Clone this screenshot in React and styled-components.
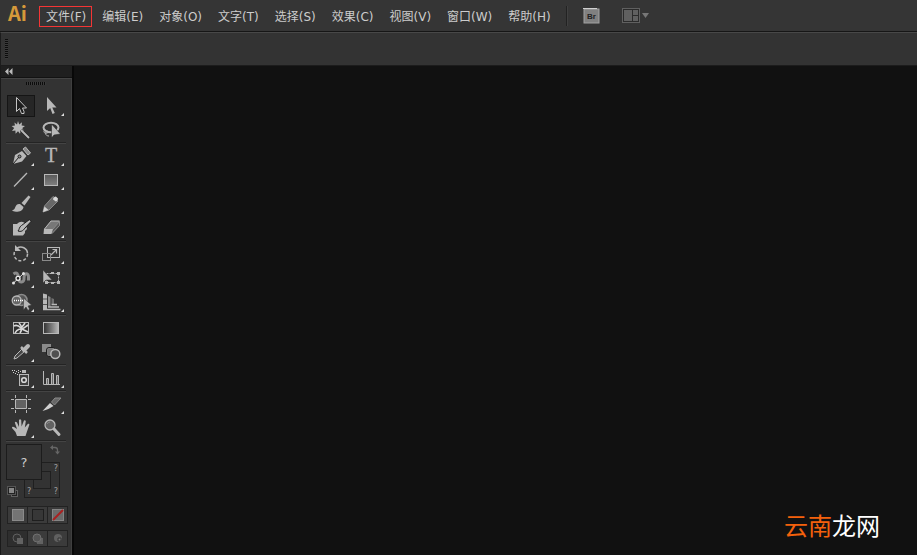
import styled, { createGlobalStyle } from "styled-components";

const GlobalStyle = createGlobalStyle`
  * {
    box-sizing: border-box;
  }

  body {
    margin: 0;
    background-color: #111111;
    font-family: "DejaVu Sans", "Noto Sans CJK SC", sans-serif;
    font-size: 12px;
    color: #cccccc;
  }

  button {
    margin: 0;
    padding: 0;
    border: none;
    background: none;
    color: inherit;
    font: inherit;
    cursor: pointer;
  }

  svg {
    display: block;
  }
`;

const AppWrapper = styled.div`
  display: flex;
  flex-direction: column;
  min-height: 100vh;
`;

const MenuBar = styled.header`
  display: flex;
  align-items: center;
  height: 32px;
  padding-left: 8px;
  background-color: #353535;
  border-bottom: 1px solid #161616;
`;

const AppLogo = styled.div`
  align-self: flex-start;
  width: 31px;
  font-family: "Noto Sans CJK SC", sans-serif;
  font-size: 20px;
  font-weight: bold;
  line-height: 26px;
  color: #d5993a;
`;

const MenuList = styled.nav`
  display: flex;
  gap: 4px;
  margin-top: 2px;
`;

const MenuItem = styled.button`
  height: 21px;
  padding: 0 5px 0 6px;
  line-height: 18px;
  white-space: nowrap;
  border: 1px solid ${(props) => (props.$active ? "#f43535" : "transparent")};

  & + & {
    padding-left: 5px;
  }
`;

const MenuDivider = styled.div`
  width: 2px;
  height: 20px;
  margin: 0 15px 0 9px;
  background-color: #222222;
  border-right: 1px solid #404040;
`;

const BarButton = styled.button`
  margin-right: 22px;
`;

const ControlBar = styled.div`
  display: flex;
  align-items: center;
  height: 34px;
  padding-left: 4px;
  background-color: #333333;
  border-top: 1px solid #484848;
  border-bottom: 1px solid #1c1c1c;
  border-left: 1px solid #1c1c1c;
`;

const BarGrip = styled.div`
  width: 3px;
  height: 20px;
  background: repeating-linear-gradient(#0c0c0c 0 1px, #3a3a3a 1px 2px);
`;

const Workspace = styled.main`
  display: flex;
  flex: 1;
`;

const ToolPanel = styled.aside`
  flex: none;
  width: 74px;
  background-color: #333333;
  border-left: 1px solid #1a1a1a;
  border-right: 2px solid #080808;
`;

const PanelHeader = styled.button`
  display: block;
  width: 100%;
  height: 12px;
  padding: 2px 4px;
  background-color: #1f1f1f;
  border-bottom: 1px solid #121212;
`;

const PanelBody = styled.div`
  padding: 3px 4px 8px 5px;
  border-top: 1px solid #444444;
  border-right: 1px solid #3f3f3f;
`;

const PanelGrip = styled.div`
  width: 20px;
  height: 3px;
  margin: 0 auto 9px 20px;
  background: repeating-linear-gradient(
    90deg,
    #0c0c0c 0 1px,
    #3a3a3a 1px 2px
  );
`;

const ToolGroup = styled.div`
  display: grid;
  grid-template-columns: 30px 30px;
  width: 60px;
  border-bottom: 1px solid #444444;
  box-shadow: inset 0 -1px 0 #242424;
  padding-bottom: 1px;
`;

const ToolButton = styled.button`
  width: 30px;
  height: 24px;
`;

const ColorArea = styled.div`
  position: relative;
  width: 60px;
  height: 64px;
`;

const FillSwatch = styled.button`
  position: absolute;
  top: 2px;
  left: 0;
  width: 36px;
  height: 36px;
  border: 1px solid #1c1c1c;
  background-color: #333333;
  font-size: 13px;
`;

const StrokeSwatch = styled.button`
  position: absolute;
  top: 20px;
  left: 18px;
  display: flex;
  flex-direction: column;
  justify-content: space-between;
  width: 36px;
  height: 36px;
  padding: 1px;
  border: 1px solid #1f1f1f;
  font-size: 8px;
  line-height: 9px;
  color: #a0a0a0;
`;

const SwatchRow = styled.span`
  display: flex;
  justify-content: ${(props) => (props.$end ? "flex-end" : "space-between")};
  width: 100%;
  padding-left: 1px;
`;

const StrokeHole = styled.span`
  position: absolute;
  inset: 8px;
  border: 1px solid #1f1f1f;
`;

const SwapButton = styled.button`
  position: absolute;
  top: 3px;
  right: 6px;
`;

const DefaultButton = styled.button`
  position: absolute;
  top: 44px;
  left: 1px;
`;

const ModeRow = styled.div`
  display: flex;
  width: 61px;
  height: ${(props) => (props.$small ? "17px" : "18px")};
  margin: 0 0 6px 1px;
  border: 1px solid #222222;
`;

const ModeButton = styled.button`
  display: flex;
  flex: 1;
  align-items: center;
  justify-content: center;
  background-color: ${(props) => (props.$pressed ? "#2e2e2e" : "#3b3b3b")};

  & + & {
    border-left: 1px solid #222222;
  }
`;

const Canvas = styled.section`
  display: flex;
  flex: 1;
  align-items: flex-end;
  justify-content: flex-end;
  padding: 0 37px 18px 0;
  background-color: #111111;
`;

const Watermark = styled.div`
  font-family: "Noto Sans CJK SC", sans-serif;
  font-size: 24px;
  line-height: 36px;
  color: #ffffff;
`;

const WatermarkAccent = styled.span`
  color: #f4610c;
`;

const menus = [
  "文件(F)",
  "编辑(E)",
  "对象(O)",
  "文字(T)",
  "选择(S)",
  "效果(C)",
  "视图(V)",
  "窗口(W)",
  "帮助(H)",
];

const light = "#b8b8b8";
const mid = "#8a8a8a";
const dark = "#1e1e1e";

// every tool icon is drawn in a 30x24 cell
const icons = {
  selection: (
    <>
      <rect x="1.5" y="1.5" width="27" height="21" fill="#262626" stroke="#151515" />
      <path
        d="M10.5 3.5V17.5L13.5 14.5L15.5 19.5H18V17.5L16.5 14H20.5Z"
        fill={dark}
        stroke="#c4c4c4"
      />
    </>
  ),
  direct: <path d="M11 3V17L14.2 14L16.5 20L18.8 19L16.3 13.4H20.5Z" fill={light} />,
  wand: (
    <>
      <path
        d="M12 3L13.2 6.4L16 4.3L15.6 7.6L19 8L16.3 10L18 13L14.8 12.4L14 15.8L12 13.2L9.6 15.8L9.4 12.5L6 13L8.2 10L5.6 8L9 7.6L8.4 4.6L11 6.4Z"
        fill={light}
      />
      <path d="M15 12L23 20" stroke={dark} strokeWidth="3" />
      <path d="M15 12L23 20" stroke={light} strokeWidth="2" />
    </>
  ),
  lasso: (
    <>
      <ellipse cx="15" cy="9.5" rx="7.5" ry="4.8" fill="none" stroke={light} strokeWidth="2" />
      <path d="M9 12C7 13 8 16 11 15C14 14 12 12 10 14C9 16 10 18 13 18" fill="none" stroke={light} />
      <path d="M15.5 6V20L18 17L24.5 16Z" fill={light} stroke={dark} strokeWidth="0.5" />
    </>
  ),
  pen: (
    <>
      <path d="M7 20L9 11L16 7L20.5 12L16 17.5Z" fill={light} />
      <path d="M17 5L19.5 3L24.5 9L22 11Z" fill={mid} stroke={light} />
      <path d="M7 20L13 13" stroke={dark} />
      <circle cx="13.5" cy="12.5" r="1.5" fill={mid} stroke={dark} />
    </>
  ),
  type: (
    <text
      x="15"
      y="18"
      textAnchor="middle"
      fontFamily="Liberation Serif, serif"
      fontSize="20"
      fill={light}
      stroke={light}
      strokeWidth="0.3"
    >
      T
    </text>
  ),
  line: <path d="M8 18.5L21 5" stroke={light} strokeWidth="1.3" />,
  rectangle: <rect x="8.5" y="6.5" width="13" height="11" fill="url(#tint)" stroke={light} />,
  brush: (
    <>
      <path d="M22.5 3.5L24.5 5L18.5 13.5L15.5 11Z" fill={light} />
      <path d="M14 12L17.5 15C17 18.5 14 19.7 10 19.7C8 19.7 7 19 6 18.5C9.5 17.5 8.5 15.5 10.5 13C11.5 12 12.5 11.7 14 12Z" fill={light} />
    </>
  ),
  pencil: (
    <>
      <path d="M7 20L8.5 14L17 4.5L22 9L13 18Z" fill="#686868" stroke={mid} />
      <path d="M7 20L8.5 14.5L12.5 18Z" fill="#d0d0d0" />
      <path d="M18 7L19.5 5.5L21 7L20 8.5Z" fill="#d8d8d8" stroke="#d8d8d8" strokeWidth="2" strokeLinejoin="round" />
    </>
  ),
  blob: (
    <>
      <path d="M7 8H11C14 5 18 5 20 9L21 13L19 15V17L17 19.5H7Z" fill={light} />
      <path d="M12 15C13.5 13.5 13 11 15.5 9.5L23.5 3.5L25 5.5L19 12C17 15 15 16 12 15Z" fill={light} stroke={dark} />
    </>
  ),
  eraser: (
    <>
      <path d="M16 13L24 5V9.5L16 18Z" fill="#5c5c5c" />
      <path d="M8 13L15 5H24L17 13Z" fill="#777777" />
      <path d="M8.5 13L15 5H23.5" stroke={light} />
      <path d="M8 13H17L15.5 18H7.5Z" fill={light} />
      <path d="M16 17.5L23.5 9.5V5.5L17 13" stroke={mid} />
    </>
  ),
  rotate: (
    <>
      <path d="M11 6.2A6.7 6.7 0 0 1 21.5 11.5" fill="none" stroke={light} strokeWidth="1.5" />
      <path d="M21.5 12A6.7 6.7 0 1 1 9.5 8" fill="none" stroke={light} strokeWidth="1.5" strokeDasharray="3 2" />
      <path d="M9 3V9H15Z" fill={light} />
    </>
  ),
  scale: (
    <>
      <rect x="11.5" y="5.5" width="12" height="10" fill="none" stroke={light} />
      <rect x="6.5" y="11.5" width="8" height="7" fill="none" stroke={mid} />
      <path d="M15 13L20 8M16.5 7.5H20.5V11.5" fill="none" stroke={light} strokeWidth="1.2" />
    </>
  ),
  width: (
    <>
      <path
        d="M7.5 8C11 5.5 12 8 12.5 12C13 17.5 18.5 17 18 12C18 6.5 22.5 6.5 22.5 11V14.5"
        stroke={mid}
        strokeWidth="3"
      />
      <path d="M7 17.5L18 7" stroke="#dedede" />
      <circle cx="7.5" cy="17" r="1.5" fill="#dedede" />
      <circle cx="17.5" cy="7.5" r="1.5" fill="#dedede" />
      <circle cx="12" cy="12.3" r="2" fill={dark} stroke="#eeeeee" strokeWidth="1.3" />
    </>
  ),
  transform: (
    <>
      <rect x="10.5" y="7.5" width="12" height="9" fill="none" stroke={light} strokeDasharray="2 1" />
      <path d="M21 6h3v3h-3zM21 15h3v3h-3zM9 15h3v3h-3zM15 6h3v2h-3zM15 16h3v2h-3z" fill={light} />
      <path d="M7 4V17L10 14H16Z" fill={light} stroke="#333333" strokeWidth="0.5" />
    </>
  ),
  builder: (
    <>
      <circle cx="15.5" cy="10" r="5.5" fill="#555555" stroke={mid} strokeWidth="1.5" />
      <circle cx="10.7" cy="10.5" r="4.5" fill="#666666" stroke={light} strokeWidth="1.3" />
      <path d="M8 10.5H18" stroke="#ffffff" strokeWidth="1.5" strokeDasharray="1 1" />
      <path d="M17.5 8V20L20 17L22 20.5L23.5 19L22 16L25.5 15Z" fill={light} stroke="#333333" strokeWidth="0.5" />
    </>
  ),
  perspective: (
    <>
      <path d="M7 3.5L11 4.5V19H7Z" fill={light} />
      <path d="M7 9H11M7 14.5H11" stroke="#555555" />
      <path d="M12 6L14.5 7V17H12Z" fill={mid} />
      <path d="M15.5 8L18 9V14H15.5Z" fill="#707070" />
      <path d="M15.5 14.5H21M12 17H23M7 19.5H24.5" stroke={light} strokeWidth="1.3" />
    </>
  ),
  mesh: (
    <>
      <rect x="7.5" y="6.5" width="15" height="11" fill="#303030" stroke={light} />
      <path
        d="M8 10C11 8 13 10 15 12S19 11 22 9M9 17C11 13 15 12 18 14L22 16M13 7C16 10 16 14 14 17M19 7C17 10 16 11 15 12"
        fill="none"
        stroke="#d8d8d8"
        strokeWidth="1.6"
      />
    </>
  ),
  gradient: <rect x="7.5" y="6.5" width="15" height="11" fill="url(#fade)" stroke={light} />,
  eyedropper: (
    <>
      <path d="M8 19L9 16L16 9L18.5 11.5L11 18Z" fill="#454545" stroke={light} />
      <path d="M15 7L21 13" stroke={light} strokeWidth="2.5" />
      <path d="M18 10L22 6" stroke={light} strokeWidth="4" strokeLinecap="round" />
    </>
  ),
  blend: (
    <>
      <rect x="6" y="4" width="9" height="8" fill={mid} />
      <rect x="10.5" y="7.5" width="9" height="9" rx="2.5" fill={mid} stroke={dark} />
      <rect x="11.5" y="8.5" width="7" height="7" rx="2" fill="#777777" />
      <circle cx="19.3" cy="14" r="4.5" fill="#505050" stroke={light} strokeWidth="1.5" />
    </>
  ),
  spray: (
    <>
      <rect x="16" y="4" width="4" height="3" fill={light} />
      <rect x="13.5" y="8.5" width="9" height="11" fill="#404040" stroke={light} />
      <circle cx="18" cy="14" r="2.3" fill="#333333" stroke="#d8d8d8" strokeWidth="1.6" />
      <path
        d="M6 4h1v1h-1zM8 4h1v1h-1zM10 5h1v1h-1zM12 4h1v1h-1zM7 6h1v1h-1zM9 7h1v1h-1zM12 6h1v1h-1zM11 8h1v1h-1zM14 5h1v1h-1z"
        fill="#d0d0d0"
      />
    </>
  ),
  graph: (
    <>
      <path d="M7.5 5V18.5H24" fill="none" stroke={light} />
      <path d="M10.5 18V12.5H12.5V18M15.5 18V7.5H17.5V18M20.5 18V9.5H22.5V18" fill="#6a6a6a" stroke={light} />
    </>
  ),
  artboard: (
    <>
      <rect x="9.5" y="7.5" width="11" height="9" fill="#626262" />
      <path
        d="M9.5 3V6M20.5 3V6M9.5 18V21M20.5 18V21M5 7.5H8M22 7.5H25M5 16.5H8M22 16.5H25M9.5 7.5H20.5V16.5H9.5Z"
        fill="none"
        stroke={light}
      />
    </>
  ),
  slice: (
    <>
      <path d="M6.5 19L14 11L17.5 14C14 16 11 18 6.5 19Z" fill="#d0d0d0" />
      <path d="M15.5 10L19 6H25L18.5 13Z" fill="#666666" stroke={mid} />
    </>
  ),
  hand: (
    <path
      d="M11 20L9.5 16L6 12Q5.8 10.2 8 11L11 13L8.8 6.5Q9.4 4.8 11 6.5L13 11V4Q14 2.6 15.2 4L15.6 10.5L18 4.5Q19.5 3.8 19.8 5.2L18.8 11.5L22 7.8Q23.8 7.5 23.3 9L21 15.5L19.5 20Z"
      fill={light}
    />
  ),
  zoom: (
    <>
      <path d="M18 13L23 18.5" stroke={light} strokeWidth="3" strokeLinecap="round" />
      <circle cx="14" cy="9" r="5" fill="#626262" stroke={light} strokeWidth="1.3" />
      <path d="M11 8Q12 6 14 6" fill="none" stroke={mid} />
    </>
  ),
};

const toolGroups = [
  [
    { icon: "selection", label: "选择工具" },
    { icon: "direct", label: "直接选择工具", more: true },
    { icon: "wand", label: "魔棒工具" },
    { icon: "lasso", label: "套索工具" },
  ],
  [
    { icon: "pen", label: "钢笔工具", more: true },
    { icon: "type", label: "文字工具", more: true },
    { icon: "line", label: "直线段工具", more: true },
    { icon: "rectangle", label: "矩形工具", more: true },
    { icon: "brush", label: "画笔工具" },
    { icon: "pencil", label: "铅笔工具", more: true },
    { icon: "blob", label: "斑点画笔工具" },
    { icon: "eraser", label: "橡皮擦工具", more: true },
  ],
  [
    { icon: "rotate", label: "旋转工具", more: true },
    { icon: "scale", label: "比例缩放工具", more: true },
    { icon: "width", label: "宽度工具", more: true },
    { icon: "transform", label: "自由变换工具" },
    { icon: "builder", label: "形状生成器工具", more: true },
    { icon: "perspective", label: "透视网格工具", more: true },
  ],
  [
    { icon: "mesh", label: "网格工具" },
    { icon: "gradient", label: "渐变工具" },
    { icon: "eyedropper", label: "吸管工具", more: true },
    { icon: "blend", label: "混合工具" },
  ],
  [
    { icon: "spray", label: "符号喷枪工具", more: true },
    { icon: "graph", label: "柱形图工具", more: true },
  ],
  [
    { icon: "artboard", label: "画板工具" },
    { icon: "slice", label: "切片工具", more: true },
    { icon: "hand", label: "抓手工具", more: true },
    { icon: "zoom", label: "缩放工具" },
  ],
];

const Tool = ({ icon, label, more }) => (
  <ToolButton aria-label={label}>
    <svg width="30" height="24" viewBox="0 0 30 24" fill="none">
      <defs>
        <linearGradient id="tint" x1="0" y1="0" x2="0" y2="1">
          <stop offset="0" stopColor="#595959" />
          <stop offset="1" stopColor="#808080" />
        </linearGradient>
        <linearGradient id="fade">
          <stop offset="0" stopColor="#303030" />
          <stop offset="1" stopColor="#b8b8b8" />
        </linearGradient>
      </defs>
      {icons[icon]}
      {more && <path d="M28 19V22H25Z" fill="#e0e0e0" />}
    </svg>
  </ToolButton>
);

const Header = () => (
  <MenuBar>
    <AppLogo>Ai</AppLogo>
    <MenuList>
      {menus.map((menu, index) => (
        <MenuItem key={menu} $active={index === 0}>
          {menu}
        </MenuItem>
      ))}
    </MenuList>
    <MenuDivider />
    <BarButton aria-label="Bridge">
      <svg width="17" height="16" viewBox="0 0 17 16">
        <rect x="1" y="1" width="15" height="14" fill="#808080" stroke="#a2a2a2" />
        <path d="M0 .5H14" stroke="#d0d0d0" />
        <text x="8.5" y="11" textAnchor="middle" fontFamily="Liberation Sans, sans-serif" fontSize="8" fontWeight="bold" fill="#222222">
          Br
        </text>
      </svg>
    </BarButton>
    <BarButton aria-label="排列文档">
      <svg width="27" height="15" viewBox="0 0 27 15">
        <rect x="0.5" y="0.5" width="17" height="14" fill="#2b2b2b" stroke="#606060" />
        <path d="M2 2h8v11H2zM11 2h5v5h-5zM11 8h5v5h-5z" fill="#606060" />
        <path d="M20 5H27L23.5 10Z" fill="#777777" />
      </svg>
    </BarButton>
  </MenuBar>
);

const ColorControls = () => (
  <>
    <ColorArea>
      <StrokeSwatch aria-label="描边">
        <SwatchRow $end>?</SwatchRow>
        <SwatchRow>
          <span>?</span>
          <span>?</span>
        </SwatchRow>
        <StrokeHole />
      </StrokeSwatch>
      <FillSwatch aria-label="填色">?</FillSwatch>
      <SwapButton aria-label="互换填色和描边">
        <svg width="10" height="10" viewBox="0 0 10 10">
          <path d="M2 2.5H5Q7.5 2.5 7.5 5V7" fill="none" stroke="#666666" strokeWidth="1.3" />
          <path d="M0 2.5L3 0V5ZM5 6.5H10L7.5 9.5Z" fill="#666666" />
        </svg>
      </SwapButton>
      <DefaultButton aria-label="默认填色和描边">
        <svg width="12" height="12" viewBox="0 0 12 12">
          <rect x="4.5" y="4.5" width="6" height="6" fill="#222222" stroke="#606060" />
          <rect x="0.5" y="0.5" width="8" height="8" fill="#222222" stroke="#555555" />
          <rect x="2" y="2" width="5" height="5" fill="#888888" />
        </svg>
      </DefaultButton>
    </ColorArea>
    <ModeRow>
      <ModeButton aria-label="颜色">
        <svg width="12" height="12" viewBox="0 0 12 12">
          <rect x="0.5" y="0.5" width="11" height="11" fill="#747474" stroke="#8a8a8a" />
        </svg>
      </ModeButton>
      <ModeButton aria-label="渐变">
        <svg width="12" height="12" viewBox="0 0 12 12">
          <rect x="0.5" y="0.5" width="11" height="11" fill="#373737" stroke="#1e1e1e" />
        </svg>
      </ModeButton>
      <ModeButton aria-label="无">
        <svg width="12" height="12" viewBox="0 0 12 12">
          <rect x="0.5" y="0.5" width="11" height="11" fill="#6c6c6c" stroke="#858585" />
          <path d="M1 11L11 1" stroke="#a92121" strokeWidth="2" />
        </svg>
      </ModeButton>
    </ModeRow>
    <ModeRow $small>
      <ModeButton aria-label="正常绘图" $pressed>
        <svg width="12" height="12" viewBox="0 0 12 12">
          <circle cx="5" cy="5" r="4" fill="#333333" stroke="#606060" />
          <rect x="5" y="5" width="6" height="6" fill="#626262" />
        </svg>
      </ModeButton>
      <ModeButton aria-label="背面绘图">
        <svg width="12" height="12" viewBox="0 0 12 12">
          <rect x="5" y="5" width="6" height="6" fill="#626262" />
          <circle cx="5" cy="5" r="4" fill="#555555" stroke="#707070" />
        </svg>
      </ModeButton>
      <ModeButton aria-label="内部绘图">
        <svg width="12" height="12" viewBox="0 0 12 12">
          <circle cx="6" cy="5" r="4" fill="#606060" />
          <path d="M6 5H9V8H6Z" fill="#777777" stroke="#333333" />
        </svg>
      </ModeButton>
    </ModeRow>
  </>
);

const Toolbox = () => (
  <ToolPanel>
    <PanelHeader aria-label="折叠面板">
      <svg width="8" height="7" viewBox="0 0 8 7">
        <path d="M3.5 0V7L0 3.5ZM7.5 0V7L4 3.5Z" fill="#bbbbbb" />
      </svg>
    </PanelHeader>
    <PanelBody>
      <PanelGrip />
      {toolGroups.map((group) => (
        <ToolGroup key={group[0].icon}>
          {group.map((tool) => (
            <Tool key={tool.icon} {...tool} />
          ))}
        </ToolGroup>
      ))}
      <ColorControls />
    </PanelBody>
  </ToolPanel>
);

export default function App() {
  return (
    <AppWrapper>
      <GlobalStyle />
      <Header />
      <ControlBar>
        <BarGrip />
      </ControlBar>
      <Workspace>
        <Toolbox />
        <Canvas>
          <Watermark>
            <WatermarkAccent>云南</WatermarkAccent>龙网
          </Watermark>
        </Canvas>
      </Workspace>
    </AppWrapper>
  );
}
